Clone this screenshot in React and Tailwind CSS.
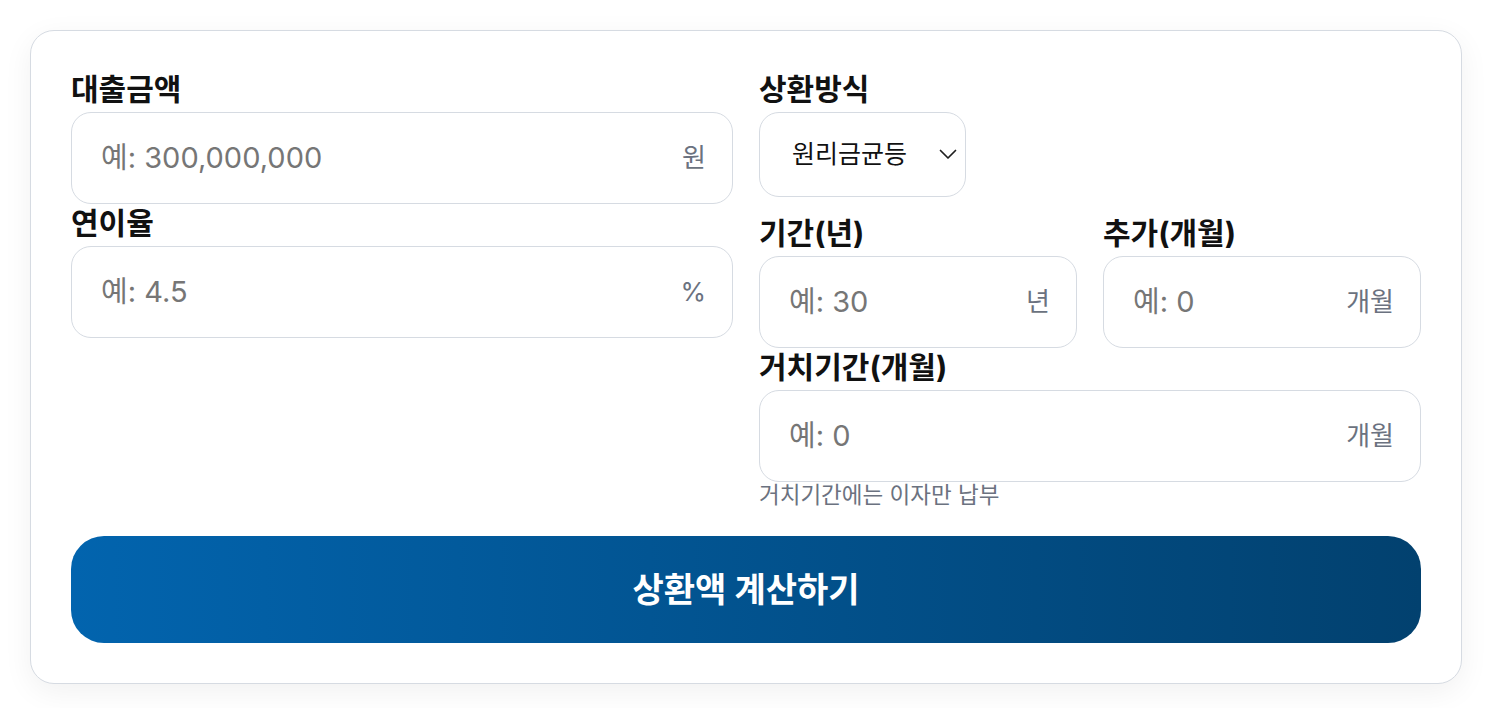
import React from "react";

const FONT = { fontFamily: 'Inter, "Noto Sans CJK KR", sans-serif' };

function Label({ children }) {
  return (
    <div className="text-[30px] leading-[31px] pt-[3px] font-bold text-[#111111] mb-[7px]">
      {children}
    </div>
  );
}

function Field({ label, placeholder, suffix }) {
  return (
    <div className="flex flex-col">
      <Label>{label}</Label>
      <div className="h-[92px] flex items-center rounded-[20px] border border-[#d6dbe2] bg-white pl-[29px] pr-[26px]">
        <input
          type="text"
          placeholder={placeholder}
          className="flex-1 min-w-0 bg-transparent outline-none text-[29px] text-[#111] placeholder:text-[#767676]"
          style={FONT}
        />
        <span className="text-[26px] text-[#6b7280] leading-none">{suffix}</span>
      </div>
    </div>
  );
}

export default function App() {
  return (
    <div className="min-h-screen bg-white pt-[30px] pl-[30px]" style={FONT}>
      <div className="w-[1432px] rounded-[24px] border border-[#d6dbe2] bg-white p-[40px] shadow-[0_8px_30px_rgba(0,0,0,0.06)]">
        <div className="grid grid-cols-2 gap-x-[26px]">
          <div className="flex flex-col gap-[1px]">
            <Field label="대출금액" placeholder="예: 300,000,000" suffix="원" />
            <Field label="연이율" placeholder="예: 4.5" suffix="%" />
          </div>
          <div className="flex flex-col">
            <div className="flex flex-col">
              <Label>상환방식</Label>
              <div className="w-[207px] h-[85px] flex items-center justify-between rounded-[20px] border border-[#d6dbe2] bg-white pl-[32px] pr-[8px]">
                <span className="text-[25px] text-[#111]">원리금균등</span>
                <svg width="18" height="11" viewBox="0 0 18 11" fill="none">
                  <path d="M1.5 1.5L9 9L16.5 1.5" stroke="#1f1f1f" strokeWidth="1.7" strokeLinecap="round" strokeLinejoin="round" />
                </svg>
              </div>
            </div>
            <div className="grid grid-cols-2 gap-x-[26px] mt-[18px]">
              <Field label="기간(년)" placeholder="예: 30" suffix="년" />
              <Field label="추가(개월)" placeholder="예: 0" suffix="개월" />
            </div>
            <div className="mt-[1px]">
              <Field label="거치기간(개월)" placeholder="예: 0" suffix="개월" />
              <div className="mt-[1px] text-[22.5px] leading-[24px] text-[#6b7280]">
                거치기간에는 이자만 납부
              </div>
            </div>
          </div>
        </div>
        <button
          type="button"
          className="mt-[29px] w-full h-[107px] rounded-[33px] bg-[linear-gradient(to_right,#0264ae,#02416f)] text-white text-[34px] font-bold"
          style={FONT}
        >
          상환액 계산하기
        </button>
      </div>
    </div>
  );
}
